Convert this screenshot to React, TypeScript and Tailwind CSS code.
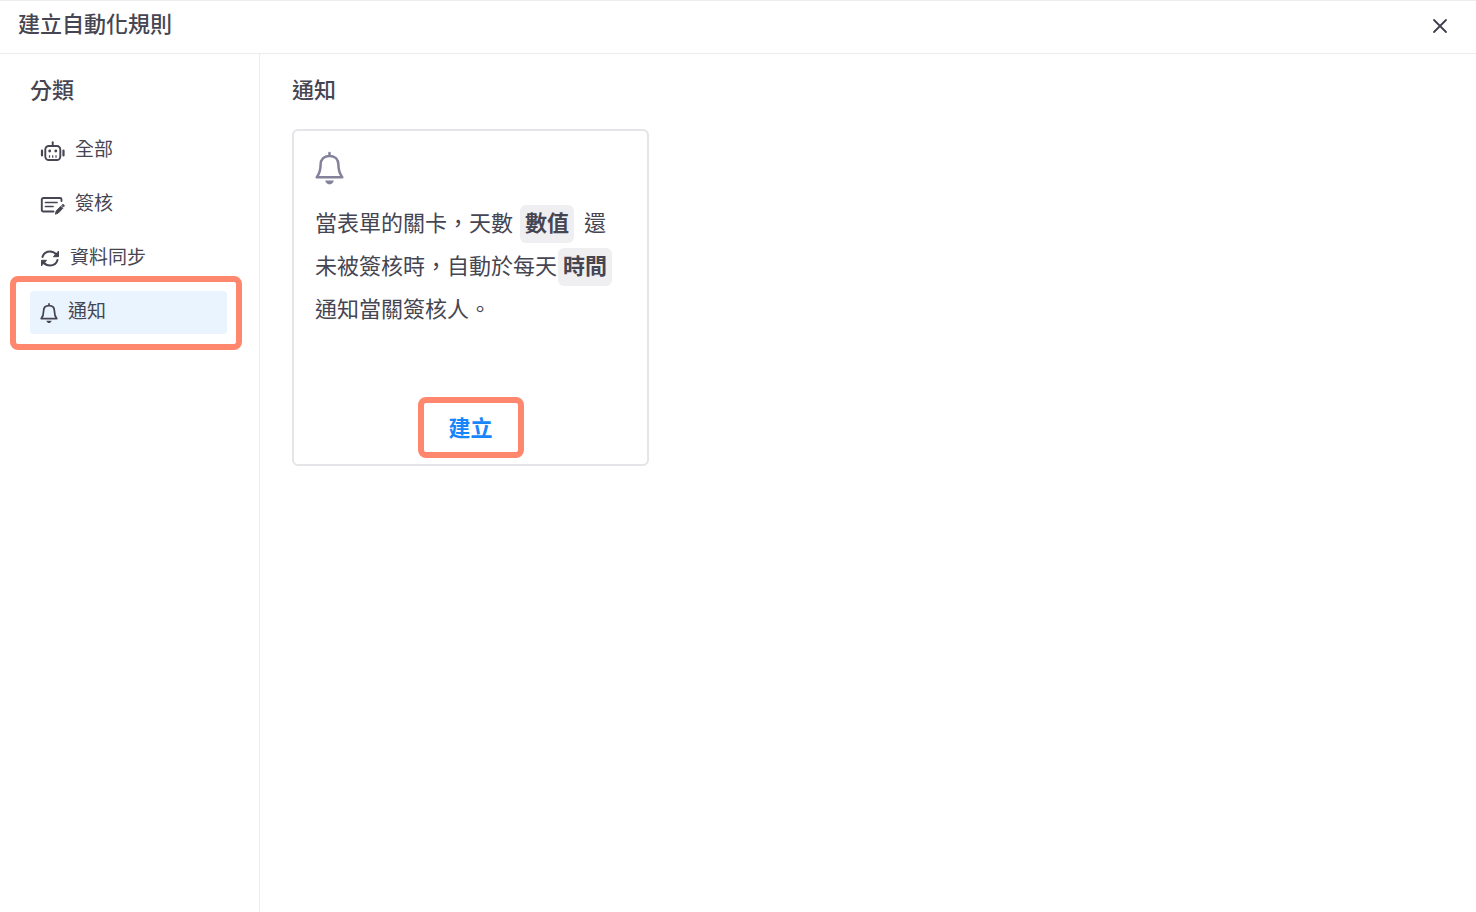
import { ReactNode, useState } from "react";

type Category = { id: string; label: string; icon: ReactNode };

const categories: Category[] = [
  { id: "all", label: "全部", icon: <RobotIcon /> },
  { id: "sign", label: "簽核", icon: <SignIcon /> },
  { id: "sync", label: "資料同步", icon: <SyncIcon /> },
  { id: "notify", label: "通知", icon: <BellIcon className="h-5 w-[18px] stroke-[3px]" /> },
];

export default function App() {
  const [active, setActive] = useState("notify");

  return (
    <div className="flex min-h-screen flex-col border-t border-[#ededee] bg-white font-['Noto_Sans_CJK_TC',sans-serif] text-[#464552]">
      {/* Header */}
      <header className="flex h-[53px] items-center justify-between border-b border-[#ececee] pr-6 pb-0.5 pl-[18px]">
        <h1 className="pb-2 text-[22px] font-medium leading-8">建立自動化規則</h1>
        <button type="button" aria-label="關閉" className="flex h-6 w-6 items-center justify-center">
          <svg viewBox="0 0 16 16" className="h-4 w-4" fill="none" stroke="#3f3e4d" strokeWidth="1.8" strokeLinecap="round">
            <path d="M2 2l12 12M14 2L2 14" />
          </svg>
        </button>
      </header>

      <div className="flex flex-1">
        {/* Categories */}
        <aside className="w-[260px] shrink-0 border-r border-[#ececee] pt-[18px] pr-8 pl-[30px]">
          <h2 className="text-[22px] font-medium leading-8">分類</h2>
          <nav className="mt-[25px] flex flex-col gap-[11px]">
            {categories.map((c) => (
              <div key={c.id} className="relative">
                <button
                  type="button"
                  onClick={() => setActive(c.id)}
                  className={`flex h-[43px] w-full items-center gap-2.5 rounded px-2.5 text-[19px] ${
                    active === c.id ? "bg-[#e9f4ff]" : ""
                  }`}
                >
                  {c.icon}
                  <span className="pb-1.5 leading-7">{c.label}</span>
                </button>
                {c.id === "notify" && <Highlight className="-top-[15px] -right-[15px] -bottom-4 -left-5" />}
              </div>
            ))}
          </nav>
        </aside>

        {/* Rules */}
        <main className="min-w-0 flex-1 px-8 pt-[18px]">
          <h2 className="text-[22px] font-medium leading-8">通知</h2>
          <article className="mt-[25px] flex min-h-[337px] max-w-[357px] flex-col rounded-md border-2 border-[#e5e5e9] px-[21px] pt-5">
            <BellIcon className="h-[34px] w-[29px] stroke-[2.6px] text-[#83829a]" />
            <p className="mt-[15px] text-[22px] leading-[43px] whitespace-nowrap">
              當表單的關卡，天數
              <Chip className="mr-2.5 ml-[7px]">數值</Chip>還
              <br />
              未被簽核時，自動於每天
              <Chip className="ml-px">時間</Chip>
              <br />
              通知當關簽核人。
            </p>
            <div className="relative mx-auto mt-auto mb-1.5">
              <button type="button" className="h-[61px] w-[106px] pb-0.5 text-[22px] font-bold text-[#1785fb]">
                建立
              </button>
              <Highlight className="inset-0" />
            </div>
          </article>
        </main>
      </div>
    </div>
  );
}

function Chip({ children, className }: { children: ReactNode; className: string }) {
  return <span className={`rounded-md bg-[#efeff1] px-[5px] pb-1.5 font-bold ${className}`}>{children}</span>;
}

function Highlight({ className }: { className: string }) {
  return <span className={`pointer-events-none absolute rounded-lg border-6 border-[#ff876d] ${className}`} />;
}

function BellIcon({ className }: { className: string }) {
  return (
    <svg viewBox="0 0 30 34" className={`shrink-0 ${className}`} fill="none" stroke="currentColor" strokeLinecap="round" strokeLinejoin="round">
      <path d="M15 1.500v3M15 4.500C9 4.500 5.800 8.500 5.800 13.500C5.800 19 5 22.500 1.800 26.500H28.200C25 22.500 24.200 19 24.200 13.500C24.200 8.500 21 4.500 15 4.500Z" />
      <path fill="currentColor" stroke="none" d="M10.500 30H19.500C19 32 17.200 34 15 34S11 32 10.500 30Z" />
    </svg>
  );
}

function RobotIcon() {
  return (
    <svg viewBox="0 0 25 20" className="h-5 w-[25px] shrink-0" fill="none" stroke="currentColor" strokeWidth="1.900" strokeLinecap="round">
      <rect x="5.300" y="5" width="15" height="14" rx="3.500" />
      <path d="M12.700 1.200v3.500" />
      <path strokeWidth="2.200" d="M2 9.500v5M23.500 9.500v5" />
      <path strokeWidth="1.200" strokeLinecap="butt" d="M9.500 14.200v2.500M12.700 14.200v2.500M16 14.200v2.500" />
      <circle cx="9.700" cy="10" r="1.400" fill="currentColor" stroke="none" />
      <circle cx="15.800" cy="10" r="1.400" fill="currentColor" stroke="none" />
    </svg>
  );
}

function SignIcon() {
  return (
    <svg viewBox="0 0 25 20" className="h-5 w-[25px] shrink-0" fill="none" stroke="currentColor" strokeWidth="1.900" strokeLinecap="round" strokeLinejoin="round">
      <path d="M21.500 6V4.500C21.500 3.500 21 3 20 3H3.500C2.500 3 1.800 3.500 1.800 4.500V15C1.800 16 2.500 16.500 3.500 16.500H13.500" />
      <path strokeWidth="1.700" d="M5.500 7.500H17M5.500 11.500H13" />
      <path fill="currentColor" strokeWidth="1" d="M15.500 18.800L16.200 16L20.800 11.300L22.800 13.300L18.300 18ZM22 10.200L23 9.200L24.400 10.800L23.600 11.800Z" />
    </svg>
  );
}

function SyncIcon() {
  return (
    <svg viewBox="0 0 20 20" className="h-5 w-5 shrink-0" fill="none" stroke="currentColor" strokeWidth="2" strokeLinecap="round" strokeLinejoin="round">
      <path d="M2.500 8C3.500 4.500 6.500 2.500 10 2.500C13 2.500 15 3.700 17 6M17.500 11C16.500 14.500 13.500 16.500 10 16.500C7 16.500 5 15.300 3 13" />
      <path fill="currentColor" strokeWidth="1" d="M18.500 2.500V7.700H13.800ZM1.500 16.500V11.300H6.200Z" />
    </svg>
  );
}
